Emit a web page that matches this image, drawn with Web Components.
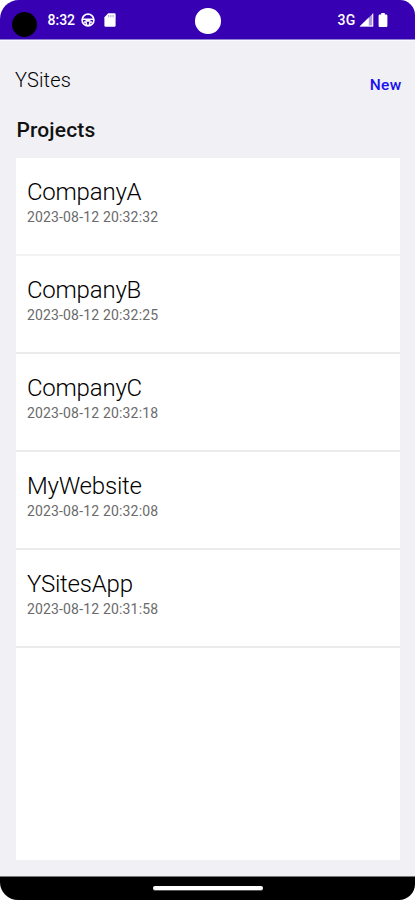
<!DOCTYPE html>
<html lang="en">
<head>
<meta charset="utf-8">
<title>YSites</title>
<style>
html,body{margin:0;height:100%;background:#fff;font-family:Roboto,"Liberation Sans",sans-serif}
</style>
</head>
<body>
<ys-screen>
  <ys-status slot="status" time="8:32" network="3G"></ys-status>
  <ys-header heading="YSites" action="New"></ys-header>
  <ys-list heading="Projects">
    <ys-project name="CompanyA" date="2023-08-12 20:32:32" style="--line:#f2f2f4"></ys-project>
    <ys-project name="CompanyB" date="2023-08-12 20:32:25"></ys-project>
    <ys-project name="CompanyC" date="2023-08-12 20:32:18"></ys-project>
    <ys-project name="MyWebsite" date="2023-08-12 20:32:08"></ys-project>
    <ys-project name="YSitesApp" date="2023-08-12 20:31:58"></ys-project>
  </ys-list>
  <ys-navbar slot="nav"></ys-navbar>
</ys-screen>
<script>
class Base extends HTMLElement {
  connectedCallback() {
    if (this.shadowRoot) return;
    this.attachShadow({mode: 'open'}).innerHTML = this.view();
  }
  at(n) { return this.getAttribute(n) || ''; }
}
customElements.define('ys-screen', class extends Base {
  view() { return `<style>
    :host{display:flex;flex-direction:column;width:415px;height:900px;overflow:hidden;background:#f0f0f5;border-radius:19px 15px 16px 18px}
    main{flex:1;min-height:0;display:flex;flex-direction:column}
    </style><slot name="status"></slot><main><slot></slot></main><slot name="nav"></slot>`; }
});
customElements.define('ys-status', class extends Base {
  view() { return `<style>
    :host{display:grid;grid-template-columns:1fr 26px 1fr;align-items:center;box-sizing:border-box;height:40px;padding:1px 12px 0 12px;background:#3700b3;border-bottom:1px solid #8f84cd;box-shadow:0 1px #fafaff;color:#fff;font-size:14px;font-weight:500}
    div{display:flex;align-items:center}
    .hole{width:25px;height:25px;border-radius:50%;background:#000;margin:8px 10.500px 0 0}
    .cam{width:25.500px;height:25.500px;border-radius:50%;background:#fff;margin:2px 0 0 .7px}
    .r{justify-content:flex-end;padding-right:15px}
    svg{display:block}
    </style>
    <div><span class="hole"></span><span>${this.at('time')}</span>
      <svg style="margin-left:6px" width="14" height="14" viewBox="0 0 14 14" fill="none" stroke="#fff"><circle cx="7" cy="7" r="5.9" stroke-width="1.7"/><path d="M1.5 6.2h11M3 9l2 .2.8 3M11 9l-2 .2-.8 3" stroke-width="1.5"/><path d="M4.500 6h5v2.800h-5z" fill="#fff" stroke="none"/></svg>
      <svg style="margin-left:9px" width="12" height="14" viewBox="0 0 12 14"><path d="M4.200.3H10.400a1.200 1.200 0 0 1 1.200 1.200v11a1.200 1.200 0 0 1-1.200 1.200H1.600A1.200 1.200 0 0 1 .4 12.500V4.300z" fill="#fff"/><path d="M4.700 2v2.300M6.900 2v2.300M9.100 2v2.300" stroke="#a58bdc" stroke-width=".9"/></svg>
    </div><span class="cam"></span>
    <div class="r"><span style="letter-spacing:.3px">${this.at('network')}</span>
      <svg style="margin-left:3px" width="15" height="14" viewBox="0 0 15 14"><path d="M14.200.3v13.200H.6z" fill="#ad98e0"/><path d="M9.800 4.600v8.900H.6zM13.200 1.300l1-1v13.200h-1zM9.800 12.500h4v1h-4z" fill="#fff"/></svg>
      <svg style="margin-left:4.500px" width="10" height="14" viewBox="0 0 10 14"><path d="M3.200 0h3.600v1.500h1.400q1.200 0 1.200 1.200v10q0 1.200-1.200 1.200H1.800Q.6 13.900.6 12.700v-10q0-1.200 1.200-1.200h1.400z" fill="#fff"/></svg>
    </div>`; }
});
customElements.define('ys-header', class extends Base {
  view() { return `<style>
    :host{display:flex;justify-content:space-between;align-items:flex-start;height:62px;padding:0 14px 0 15px}
    h1{margin:28px 0 0;font-size:20px;line-height:24px;font-weight:300;color:#000;letter-spacing:.15px}
    button{all:unset;margin-top:35px;font-size:15.500px;line-height:20px;font-weight:500;color:#1a0ff0;letter-spacing:.3px;margin-right:-.5px}
    </style><h1>${this.at('heading')}</h1><button>${this.at('action')}</button>`; }
});
customElements.define('ys-list', class extends Base {
  view() { return `<style>
    :host{flex:1;display:flex;flex-direction:column;padding:16px 15px 16px 16.400px}
    h2{margin:0;height:40px;font-size:21px;line-height:24px;font-weight:500;color:#111;letter-spacing:.15px}
    section{flex:1;background:#fff}
    </style><h2>${this.at('heading')}</h2><section><slot></slot></section>`; }
});
customElements.define('ys-project', class extends Base {
  view() { return `<style>
    :host{display:block;box-sizing:border-box;height:98.100px;padding:20.100px 10.500px 0;border-bottom:2px solid var(--line,#ebebed)}
    h3{margin:0;font-size:24px;line-height:28px;font-weight:300;color:#000;letter-spacing:-.2px}
    p{margin:2.700px 0 0;font-size:14px;line-height:16px;font-weight:400;color:#6b6b6b;letter-spacing:.17px}
    </style><h3>${this.at('name')}</h3><p>${this.at('date')}</p>`; }
});
customElements.define('ys-navbar', class extends Base {
  view() { return `<style>
    :host{display:flex;justify-content:center;align-items:flex-start;box-sizing:border-box;height:24px;padding-top:9px;background:#000;border-top:1px solid #777}
    i{width:110px;height:4px;border-radius:2px;background:#fff;box-shadow:0 1px #555}
    </style><i></i>`; }
});
</script>
</body>
</html>
